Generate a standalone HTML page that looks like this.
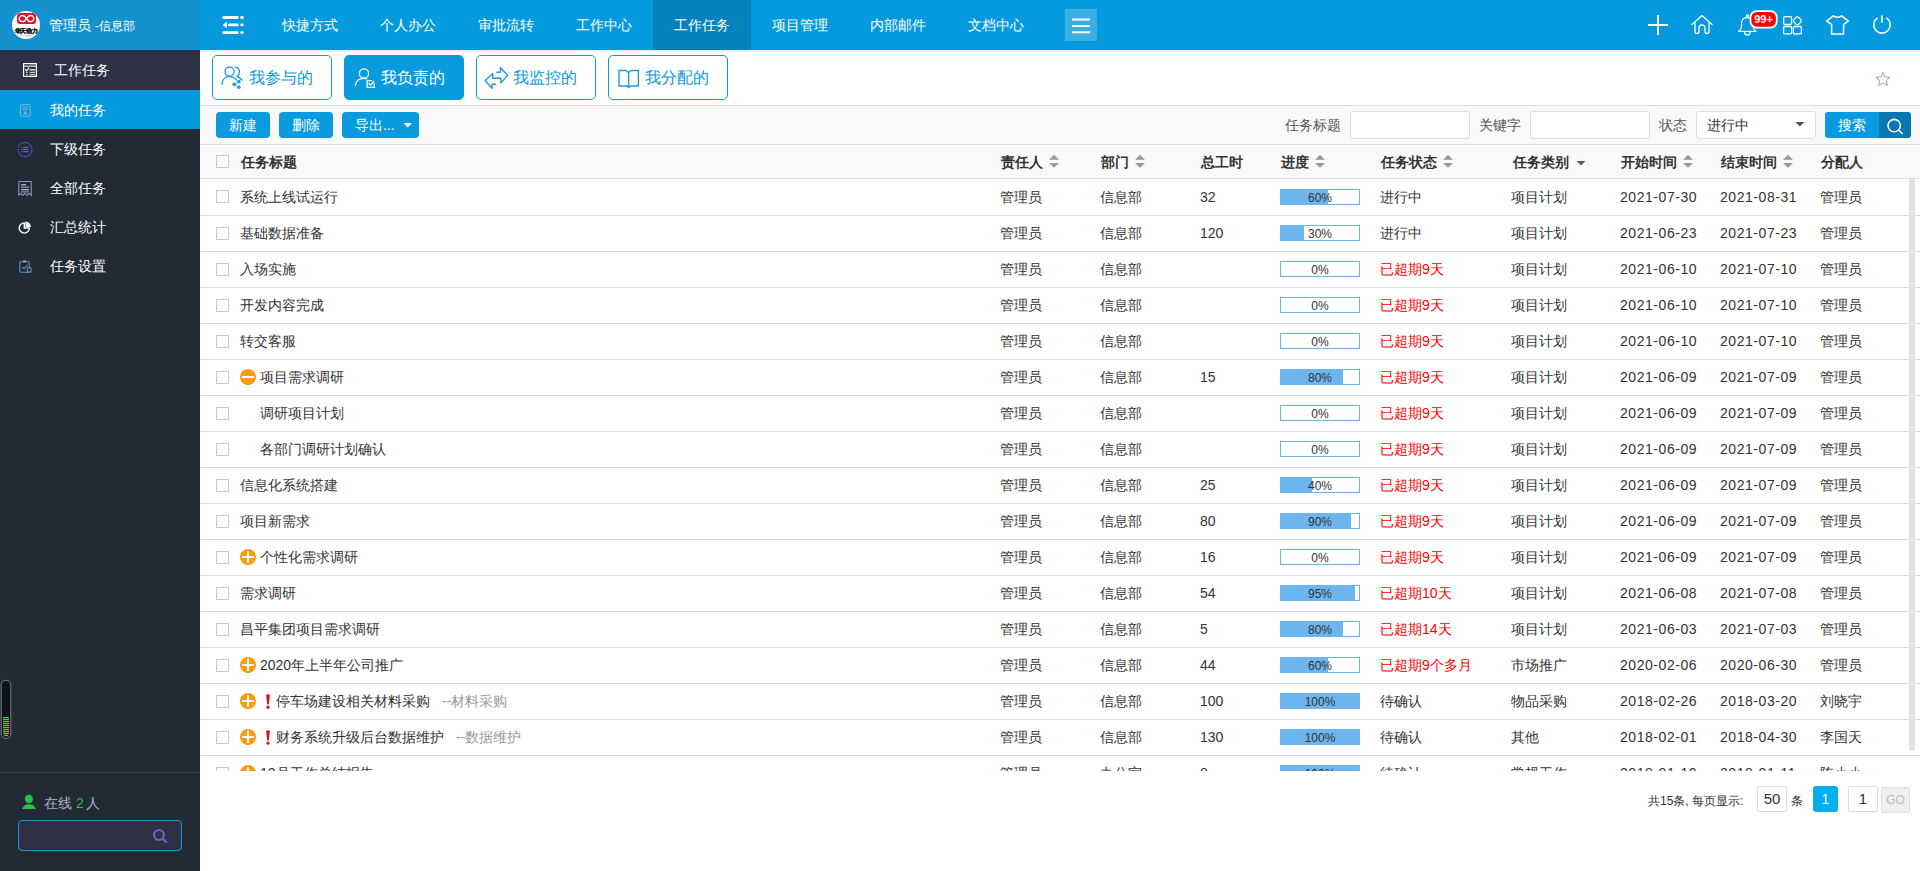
<!DOCTYPE html>
<html><head><meta charset="utf-8">
<style>
*{box-sizing:border-box;margin:0;padding:0}
html,body{width:1920px;height:871px;overflow:hidden;background:#fff;font-family:"Liberation Sans",sans-serif;font-size:14px;color:#333}
.abs{position:absolute}
#side{position:absolute;left:0;top:0;width:200px;height:871px;background:#222a36}
#shead{position:absolute;left:0;top:0;width:200px;height:50px;background:#1492d0}
#logo{position:absolute;left:12px;top:11px;width:28px;height:28px;border-radius:50%;background:#fff;overflow:hidden}
#uname{position:absolute;left:49px;top:16px;color:#fff;font-size:14px;line-height:18px;white-space:nowrap}
.mi{position:absolute;left:0;width:200px;height:39px;color:#fff;font-size:14px}
.mi span{position:absolute;left:50px;top:11px;line-height:18px;white-space:nowrap}
.mi svg{position:absolute}
#nav{position:absolute;left:200px;top:0;width:1720px;height:50px;background:#059add}
.nv{position:absolute;top:0;height:50px;width:98px;color:#fff;font-size:14px;line-height:50px;text-align:center;white-space:nowrap}
.nv.act{background:#0382be}
#tabs{position:absolute;left:200px;top:50px;width:1720px;height:56px;background:#fff;border-bottom:1px solid #ddd}
.tb{position:absolute;top:5px;width:120px;height:45px;border:1px solid #099bdd;border-radius:5px;color:#099bdd;font-size:16px}
.tb.act{background:#099bdd;color:#fff}
.tb span{position:absolute;left:36px;top:12px;line-height:20px;white-space:nowrap}
.tb svg{position:absolute}
#tool{position:absolute;left:200px;top:106px;width:1720px;height:39px;background:#f9f9f9;border-bottom:1px solid #ddd}
.bt{position:absolute;top:6px;height:26px;background:#099bdd;border-radius:4px;color:#fff;font-size:14px;line-height:26px}
.lbl{position:absolute;top:10px;line-height:18px;font-size:14px;color:#555;white-space:nowrap}
.inp{position:absolute;top:5px;width:120px;height:28px;background:#fff;border:1px solid #ddd;border-radius:3px}
#thead{position:absolute;left:200px;top:145px;width:1720px;height:34px;background:#f9f9f9;border-bottom:1px solid #ddd}
.th{position:absolute;top:8px;line-height:18px;font-weight:bold;color:#333;white-space:nowrap}
.cb{position:absolute;left:16px;width:13px;height:13px;border:1px solid #c8c8c8;background:#fff;display:block}
.srt{position:absolute;top:10px}
#tbody{position:absolute;left:200px;top:179px;width:1720px;height:592px;overflow:hidden;background:#fff}
.row{position:absolute;left:0;width:1720px;height:37px;border-bottom:1px solid #ddd}
.row .cb{top:12px}
.tt{position:absolute;left:40px;top:9px;line-height:18px;white-space:nowrap;color:#333}
.c{position:absolute;top:9px;line-height:18px;white-space:nowrap;color:#333}
.c.red{color:#f00}
.d{letter-spacing:.55px}
.sub{color:#999;margin-left:12px}
.tg{position:absolute;left:40px;top:10px}
.ex{position:absolute;left:65px;top:11px}
.pbw{position:absolute;left:1080px;top:10px}
.r0 .tt,.r0 .c{top:10px}
.r0 .pbw{top:11px}
.pb{position:relative;width:80px;height:16px;border:1px solid #6cb5ef;background:#fff;overflow:hidden}
.pf{position:absolute;left:0;top:0;height:14px;background:#6cb5ef}
.pb span{position:absolute;left:0;top:1px;width:78px;text-align:center;line-height:14px;font-size:12px;color:#333}
#sbar{position:absolute;left:1909px;top:179px;width:6px;height:572px;background:#e1e1e1;border-radius:1px 1px 3px 3px}
#pager{position:absolute;left:0;top:0}
</style></head><body>
<div id="side">
  <div id="shead">
    <div id="logo"><svg width="28" height="28" viewBox="0 0 28 28"><path d="M8,2 H20.5 Q24,2 24,5.5 V10 Q24,13 21,13 H8 Q5,13 5,10 V5.5 Q5,2 8,2 Z" fill="#e0102a"/><path d="M14.5,7.6 C13,5.2 12,4.5 10.6,4.5 C8.6,4.5 7.2,5.9 7.2,7.6 C7.2,9.3 8.6,10.7 10.6,10.7 C12,10.7 13,10 14.5,7.6 C16,5.2 17,4.5 18.4,4.5 C20.4,4.5 21.8,5.9 21.8,7.6 C21.8,9.3 20.4,10.7 18.4,10.7 C17,10.7 16,10 14.5,7.6 Z" fill="none" stroke="#fff" stroke-width="1.3"/><text x="14" y="21.6" font-family="Liberation Sans" font-weight="bold" font-size="6.2" text-anchor="middle" fill="#222" stroke="#222" stroke-width="0.35" letter-spacing="-0.3">华天动力</text><text x="14" y="25.6" font-family="Liberation Sans" font-size="3.6" text-anchor="middle" fill="#aaa">OPOWER</text></svg></div>
    <div id="uname">管理员 <span style="font-size:12px">-信息部</span></div>
  </div>
  <div class="mi" style="top:50px;height:40px;background:#2e3045"><svg style="left:23px;top:63px" width="15" height="15"></svg><span style="left:54px;top:11px">工作任务</span></div>
  <div class="mi" style="top:90px;background:#059add"><span style="top:11px">我的任务</span></div>
  <div class="mi" style="top:129px"><span>下级任务</span></div>
  <div class="mi" style="top:168px"><span>全部任务</span></div>
  <div class="mi" style="top:207px"><span>汇总统计</span></div>
  <div class="mi" style="top:246px"><span>任务设置</span></div>
  <div class="abs" style="left:0;top:772px;width:200px;height:1px;background:#343b4a"></div>
  <div class="abs" style="left:44px;top:794px;color:#a3b1c2;font-size:14px;line-height:18px;white-space:nowrap">在线 <span style="color:#2bbd4b;margin-right:2px">2</span>人</div>
  <div class="abs" style="left:18px;top:820px;width:164px;height:31px;border:1px solid #1597d8;border-radius:4px;background:#2e3045"></div>
</div>
<div id="nav">
  <div class="nv" style="left:61px">快捷方式</div>
  <div class="nv" style="left:159px">个人办公</div>
  <div class="nv" style="left:257px">审批流转</div>
  <div class="nv" style="left:355px">工作中心</div>
  <div class="nv act" style="left:453px">工作任务</div>
  <div class="nv" style="left:551px">项目管理</div>
  <div class="nv" style="left:649px">内部邮件</div>
  <div class="nv" style="left:747px">文档中心</div>
</div>
<div class="abs" style="left:200px;top:50px;width:1720px;height:3px;background:linear-gradient(#ebe8e7,#fff);z-index:1"></div>
<div id="tabs">
  <div class="tb" style="left:12px"><span>我参与的</span></div>
  <div class="tb act" style="left:144px"><span>我负责的</span></div>
  <div class="tb" style="left:276px"><span>我监控的</span></div>
  <div class="tb" style="left:408px"><span>我分配的</span></div>
</div>
<div id="tool">
  <div class="bt" style="left:16px;width:54px;text-align:center">新建</div>
  <div class="bt" style="left:79px;width:54px;text-align:center">删除</div>
  <div class="bt" style="left:142px;width:77px;padding-left:13px">导出...</div>
  <div class="lbl" style="left:1085px">任务标题</div>
  <div class="inp" style="left:1150px"></div>
  <div class="lbl" style="left:1279px">关键字</div>
  <div class="inp" style="left:1330px"></div>
  <div class="lbl" style="left:1459px">状态</div>
  <div class="inp" style="left:1496px"><span class="abs" style="left:10px;top:4px;line-height:18px;color:#333">进行中</span></div>
  <div class="abs" style="left:1625px;top:6px;width:54px;height:26px;background:#099bdd;border-radius:3px 0 0 3px;color:#fff;line-height:26px;text-align:center">搜索</div>
  <div class="abs" style="left:1679px;top:6px;width:32px;height:26px;background:#0a77b0;border-radius:0 3px 3px 0"></div>
</div>
<div id="thead">
  <i class="cb" style="top:10px"></i>
  <div class="th" style="left:41px">任务标题</div>
  <div class="th" style="left:801px">责任人</div>
  <div class="th" style="left:901px">部门</div>
  <div class="th" style="left:1001px">总工时</div>
  <div class="th" style="left:1081px">进度</div>
  <div class="th" style="left:1181px">任务状态</div>
  <div class="th" style="left:1313px">任务类别</div>
  <div class="th" style="left:1421px">开始时间</div>
  <div class="th" style="left:1521px">结束时间</div>
  <div class="th" style="left:1621px">分配人</div>
</div>
<div id="tbody">
<div class="row r0" style="top:-1px;height:38px"><i class="cb"></i><span class="tt">系统上线试运行</span><span class="c" style="left:800px">管理员</span><span class="c" style="left:900px">信息部</span><span class="c n" style="left:1000px">32</span><div class="pbw"><div class="pb"><div class="pf" style="width:47px"></div><span>60%</span></div></div><span class="c" style="left:1180px">进行中</span><span class="c" style="left:1311px">项目计划</span><span class="c n d" style="left:1420px">2021-07-30</span><span class="c n d" style="left:1520px">2021-08-31</span><span class="c" style="left:1620px">管理员</span></div>
<div class="row" style="top:36px;height:37px"><i class="cb"></i><span class="tt">基础数据准备</span><span class="c" style="left:800px">管理员</span><span class="c" style="left:900px">信息部</span><span class="c n" style="left:1000px">120</span><div class="pbw"><div class="pb"><div class="pf" style="width:23px"></div><span>30%</span></div></div><span class="c" style="left:1180px">进行中</span><span class="c" style="left:1311px">项目计划</span><span class="c n d" style="left:1420px">2021-06-23</span><span class="c n d" style="left:1520px">2021-07-23</span><span class="c" style="left:1620px">管理员</span></div>
<div class="row" style="top:72px;height:37px"><i class="cb"></i><span class="tt">入场实施</span><span class="c" style="left:800px">管理员</span><span class="c" style="left:900px">信息部</span><span class="c n" style="left:1000px"></span><div class="pbw"><div class="pb"><div class="pf" style="width:0px"></div><span>0%</span></div></div><span class="c red" style="left:1180px">已超期9天</span><span class="c" style="left:1311px">项目计划</span><span class="c n d" style="left:1420px">2021-06-10</span><span class="c n d" style="left:1520px">2021-07-10</span><span class="c" style="left:1620px">管理员</span></div>
<div class="row" style="top:108px;height:37px"><i class="cb"></i><span class="tt">开发内容完成</span><span class="c" style="left:800px">管理员</span><span class="c" style="left:900px">信息部</span><span class="c n" style="left:1000px"></span><div class="pbw"><div class="pb"><div class="pf" style="width:0px"></div><span>0%</span></div></div><span class="c red" style="left:1180px">已超期9天</span><span class="c" style="left:1311px">项目计划</span><span class="c n d" style="left:1420px">2021-06-10</span><span class="c n d" style="left:1520px">2021-07-10</span><span class="c" style="left:1620px">管理员</span></div>
<div class="row" style="top:144px;height:37px"><i class="cb"></i><span class="tt">转交客服</span><span class="c" style="left:800px">管理员</span><span class="c" style="left:900px">信息部</span><span class="c n" style="left:1000px"></span><div class="pbw"><div class="pb"><div class="pf" style="width:0px"></div><span>0%</span></div></div><span class="c red" style="left:1180px">已超期9天</span><span class="c" style="left:1311px">项目计划</span><span class="c n d" style="left:1420px">2021-06-10</span><span class="c n d" style="left:1520px">2021-07-10</span><span class="c" style="left:1620px">管理员</span></div>
<div class="row" style="top:180px;height:37px"><i class="cb"></i><svg class="tg" width="16" height="16" viewBox="0 0 16 16"><circle cx="8" cy="8" r="8" fill="#fc9b10"/><rect x="2" y="7" width="12" height="2" fill="#fff"/></svg><span class="tt" style="left:60px">项目需求调研</span><span class="c" style="left:800px">管理员</span><span class="c" style="left:900px">信息部</span><span class="c n" style="left:1000px">15</span><div class="pbw"><div class="pb"><div class="pf" style="width:62px"></div><span>80%</span></div></div><span class="c red" style="left:1180px">已超期9天</span><span class="c" style="left:1311px">项目计划</span><span class="c n d" style="left:1420px">2021-06-09</span><span class="c n d" style="left:1520px">2021-07-09</span><span class="c" style="left:1620px">管理员</span></div>
<div class="row" style="top:216px;height:37px"><i class="cb"></i><span class="tt" style="left:60px">调研项目计划</span><span class="c" style="left:800px">管理员</span><span class="c" style="left:900px">信息部</span><span class="c n" style="left:1000px"></span><div class="pbw"><div class="pb"><div class="pf" style="width:0px"></div><span>0%</span></div></div><span class="c red" style="left:1180px">已超期9天</span><span class="c" style="left:1311px">项目计划</span><span class="c n d" style="left:1420px">2021-06-09</span><span class="c n d" style="left:1520px">2021-07-09</span><span class="c" style="left:1620px">管理员</span></div>
<div class="row" style="top:252px;height:37px"><i class="cb"></i><span class="tt" style="left:60px">各部门调研计划确认</span><span class="c" style="left:800px">管理员</span><span class="c" style="left:900px">信息部</span><span class="c n" style="left:1000px"></span><div class="pbw"><div class="pb"><div class="pf" style="width:0px"></div><span>0%</span></div></div><span class="c red" style="left:1180px">已超期9天</span><span class="c" style="left:1311px">项目计划</span><span class="c n d" style="left:1420px">2021-06-09</span><span class="c n d" style="left:1520px">2021-07-09</span><span class="c" style="left:1620px">管理员</span></div>
<div class="row" style="top:288px;height:37px"><i class="cb"></i><span class="tt">信息化系统搭建</span><span class="c" style="left:800px">管理员</span><span class="c" style="left:900px">信息部</span><span class="c n" style="left:1000px">25</span><div class="pbw"><div class="pb"><div class="pf" style="width:31px"></div><span>40%</span></div></div><span class="c red" style="left:1180px">已超期9天</span><span class="c" style="left:1311px">项目计划</span><span class="c n d" style="left:1420px">2021-06-09</span><span class="c n d" style="left:1520px">2021-07-09</span><span class="c" style="left:1620px">管理员</span></div>
<div class="row" style="top:324px;height:37px"><i class="cb"></i><span class="tt">项目新需求</span><span class="c" style="left:800px">管理员</span><span class="c" style="left:900px">信息部</span><span class="c n" style="left:1000px">80</span><div class="pbw"><div class="pb"><div class="pf" style="width:70px"></div><span>90%</span></div></div><span class="c red" style="left:1180px">已超期9天</span><span class="c" style="left:1311px">项目计划</span><span class="c n d" style="left:1420px">2021-06-09</span><span class="c n d" style="left:1520px">2021-07-09</span><span class="c" style="left:1620px">管理员</span></div>
<div class="row" style="top:360px;height:37px"><i class="cb"></i><svg class="tg" width="16" height="16" viewBox="0 0 16 16"><circle cx="8" cy="8" r="8" fill="#fc9b10"/><rect x="2" y="7" width="12" height="2" fill="#fff"/><rect x="7" y="2" width="2" height="12" fill="#fff"/></svg><span class="tt" style="left:60px">个性化需求调研</span><span class="c" style="left:800px">管理员</span><span class="c" style="left:900px">信息部</span><span class="c n" style="left:1000px">16</span><div class="pbw"><div class="pb"><div class="pf" style="width:0px"></div><span>0%</span></div></div><span class="c red" style="left:1180px">已超期9天</span><span class="c" style="left:1311px">项目计划</span><span class="c n d" style="left:1420px">2021-06-09</span><span class="c n d" style="left:1520px">2021-07-09</span><span class="c" style="left:1620px">管理员</span></div>
<div class="row" style="top:396px;height:37px"><i class="cb"></i><span class="tt">需求调研</span><span class="c" style="left:800px">管理员</span><span class="c" style="left:900px">信息部</span><span class="c n" style="left:1000px">54</span><div class="pbw"><div class="pb"><div class="pf" style="width:74px"></div><span>95%</span></div></div><span class="c red" style="left:1180px">已超期10天</span><span class="c" style="left:1311px">项目计划</span><span class="c n d" style="left:1420px">2021-06-08</span><span class="c n d" style="left:1520px">2021-07-08</span><span class="c" style="left:1620px">管理员</span></div>
<div class="row" style="top:432px;height:37px"><i class="cb"></i><span class="tt">昌平集团项目需求调研</span><span class="c" style="left:800px">管理员</span><span class="c" style="left:900px">信息部</span><span class="c n" style="left:1000px">5</span><div class="pbw"><div class="pb"><div class="pf" style="width:62px"></div><span>80%</span></div></div><span class="c red" style="left:1180px">已超期14天</span><span class="c" style="left:1311px">项目计划</span><span class="c n d" style="left:1420px">2021-06-03</span><span class="c n d" style="left:1520px">2021-07-03</span><span class="c" style="left:1620px">管理员</span></div>
<div class="row" style="top:468px;height:37px"><i class="cb"></i><svg class="tg" width="16" height="16" viewBox="0 0 16 16"><circle cx="8" cy="8" r="8" fill="#fc9b10"/><rect x="2" y="7" width="12" height="2" fill="#fff"/><rect x="7" y="2" width="2" height="12" fill="#fff"/></svg><span class="tt" style="left:60px">2020年上半年公司推广</span><span class="c" style="left:800px">管理员</span><span class="c" style="left:900px">信息部</span><span class="c n" style="left:1000px">44</span><div class="pbw"><div class="pb"><div class="pf" style="width:47px"></div><span>60%</span></div></div><span class="c red" style="left:1180px">已超期9个多月</span><span class="c" style="left:1311px">市场推广</span><span class="c n d" style="left:1420px">2020-02-06</span><span class="c n d" style="left:1520px">2020-06-30</span><span class="c" style="left:1620px">管理员</span></div>
<div class="row" style="top:504px;height:37px"><i class="cb"></i><svg class="tg" width="16" height="16" viewBox="0 0 16 16"><circle cx="8" cy="8" r="8" fill="#fc9b10"/><rect x="2" y="7" width="12" height="2" fill="#fff"/><rect x="7" y="2" width="2" height="12" fill="#fff"/></svg><svg class="ex" width="6" height="16" viewBox="0 0 6 16"><path d="M1.2,1.6 Q1.2,0.2 3,0.2 Q4.8,0.2 4.8,1.6 L3.8,10.6 H2.2 Z" fill="#d8130f"/><circle cx="3" cy="13.2" r="1.6" fill="#d8130f"/></svg><span class="tt" style="left:76px">停车场建设相关材料采购<span class="sub">--材料采购</span></span><span class="c" style="left:800px">管理员</span><span class="c" style="left:900px">信息部</span><span class="c n" style="left:1000px">100</span><div class="pbw"><div class="pb"><div class="pf" style="width:78px"></div><span>100%</span></div></div><span class="c" style="left:1180px">待确认</span><span class="c" style="left:1311px">物品采购</span><span class="c n d" style="left:1420px">2018-02-26</span><span class="c n d" style="left:1520px">2018-03-20</span><span class="c" style="left:1620px">刘晓宇</span></div>
<div class="row" style="top:540px;height:37px"><i class="cb"></i><svg class="tg" width="16" height="16" viewBox="0 0 16 16"><circle cx="8" cy="8" r="8" fill="#fc9b10"/><rect x="2" y="7" width="12" height="2" fill="#fff"/><rect x="7" y="2" width="2" height="12" fill="#fff"/></svg><svg class="ex" width="6" height="16" viewBox="0 0 6 16"><path d="M1.2,1.6 Q1.2,0.2 3,0.2 Q4.8,0.2 4.8,1.6 L3.8,10.6 H2.2 Z" fill="#d8130f"/><circle cx="3" cy="13.2" r="1.6" fill="#d8130f"/></svg><span class="tt" style="left:76px">财务系统升级后台数据维护<span class="sub">--数据维护</span></span><span class="c" style="left:800px">管理员</span><span class="c" style="left:900px">信息部</span><span class="c n" style="left:1000px">130</span><div class="pbw"><div class="pb"><div class="pf" style="width:78px"></div><span>100%</span></div></div><span class="c" style="left:1180px">待确认</span><span class="c" style="left:1311px">其他</span><span class="c n d" style="left:1420px">2018-02-01</span><span class="c n d" style="left:1520px">2018-04-30</span><span class="c" style="left:1620px">李国天</span></div>
<div class="row" style="top:576px;height:37px"><i class="cb"></i><svg class="tg" width="16" height="16" viewBox="0 0 16 16"><circle cx="8" cy="8" r="8" fill="#fc9b10"/><rect x="2" y="7" width="12" height="2" fill="#fff"/><rect x="7" y="2" width="2" height="12" fill="#fff"/></svg><span class="tt" style="left:60px">12月工作总结报告</span><span class="c" style="left:800px">管理员</span><span class="c" style="left:900px">办公室</span><span class="c n" style="left:1000px">8</span><div class="pbw"><div class="pb"><div class="pf" style="width:78px"></div><span>100%</span></div></div><span class="c" style="left:1180px">待确认</span><span class="c" style="left:1311px">常规工作</span><span class="c n d" style="left:1420px">2018-01-10</span><span class="c n d" style="left:1520px">2018-01-11</span><span class="c" style="left:1620px">陈小小</span></div>
</div>
<div id="sbar"></div>
<div class="abs" style="left:1648px;top:792px;font-size:12px;line-height:18px;color:#333;white-space:nowrap">共15条, 每页显示:</div>
<div class="abs" style="left:1757px;top:786px;width:30px;height:26px;border:1px solid #ddd;border-radius:2px;text-align:center;line-height:24px;font-size:15px;color:#333">50</div>
<div class="abs" style="left:1791px;top:792px;font-size:12px;line-height:18px;color:#333">条</div>
<div class="abs" style="left:1813px;top:786px;width:25px;height:26px;background:#00aff0;border-radius:3px;text-align:center;line-height:26px;font-size:14px;color:#fff">1</div>
<div class="abs" style="left:1848px;top:786px;width:30px;height:26px;border:1px solid #ddd;border-radius:2px;text-align:center;line-height:24px;font-size:15px;color:#333">1</div>
<div class="abs" style="left:1881px;top:787px;width:29px;height:26px;border:1px solid #ddd;border-radius:2px;background:#f0f0f0;text-align:center;line-height:24px;font-size:12px;color:#bbb">GO</div>
<svg id="ov" width="1920" height="871" viewBox="0 0 1920 871" style="position:absolute;left:0;top:0;pointer-events:none">
<!-- volume bar -->
<rect x="1.2" y="680.3" width="9.6" height="58.2" rx="4.8" fill="#0f1318" stroke="#7a7f87" stroke-width="1"/>
<g fill="#3fd35d">
<rect x="3" y="717" width="6" height="1.2"/><rect x="3" y="719" width="6" height="1.2"/><rect x="3" y="721" width="6" height="1.2"/><rect x="3" y="723" width="6" height="1.2"/><rect x="3" y="725" width="6" height="1.2"/><rect x="3" y="727" width="6" height="1.2"/><rect x="3" y="729" width="6" height="1.2"/><rect x="3" y="731" width="6" height="1.2"/><rect x="3" y="733" width="6" height="1.2"/><rect x="4" y="735" width="4" height="1.2"/>
</g>
<!-- person -->
<g fill="#2bc24c"><ellipse cx="28.9" cy="799" rx="4.1" ry="4.2"/><path d="M22,809 L24.5,805.5 Q28.9,803 33.5,805.5 L36,809 Z"/></g>
<!-- sidebar search -->
<g fill="none" stroke="#7466d8" stroke-width="1.9"><circle cx="159" cy="835" r="4.9"/><path d="M162.5,838.5 L167,842.5"/></g>
<!-- sidebar menu icons -->
<g fill="none" stroke="#fff" stroke-width="1.2">
<rect x="23.6" y="63.6" width="12.8" height="12.8"/>
</g>
<path d="M24,66.2 H36" stroke="#fff" stroke-width="1"/><g fill="#e8b04a"><rect x="30.5" y="64.4" width="1" height="1"/><rect x="32.3" y="64.4" width="1" height="1"/><rect x="34.1" y="64.4" width="1" height="1"/></g>
<path d="M25.2,69 L26.6,70.8 L29.2,67.6" fill="none" stroke="#fff" stroke-width="1.1"/>
<g fill="#c8cfd8"><rect x="29.6" y="69" width="5.6" height="1.6"/><rect x="29.6" y="71.8" width="5.6" height="1.2"/><rect x="29.6" y="74" width="5.6" height="1.2"/><rect x="26" y="71.8" width="1.6" height="1.2"/><rect x="26" y="74" width="1.6" height="1.2"/></g>
<g fill="none" stroke="#7fb3d3" stroke-width="1"><rect x="20.5" y="104.6" width="9.6" height="11.6" rx="1"/><path d="M22.6,107.2 H28 M22.6,109.4 H28"/></g>
<path d="M25.3,110.6 L23,114.2 L27.6,114.2 Z" fill="#7fb3d3"/>
<g fill="none" stroke="#5046c0" stroke-width="1.1"><circle cx="25" cy="149.5" r="7.1"/></g>
<g fill="#7466d0"><rect x="22.8" y="146.8" width="5.8" height="1"/><rect x="22.8" y="149" width="5.8" height="1"/><rect x="22.8" y="151.2" width="5.8" height="1"/><rect x="21.2" y="146.8" width="1" height="1"/><rect x="21.2" y="149" width="1" height="1"/><rect x="21.2" y="151.2" width="1" height="1"/></g>
<path d="M18.8,181.5 H31.2 V195.2 L29.1,193.4 L27.1,195.2 L25,193.4 L22.9,195.2 L20.8,193.4 L18.8,195.2 Z" fill="none" stroke="#8a9ab0" stroke-width="1.1"/>
<g fill="#9fb0c6"><rect x="21" y="184" width="5" height="1.4"/><rect x="21" y="186.6" width="8" height="1"/><rect x="21" y="188.9" width="8" height="1.4"/><rect x="21" y="191.4" width="8" height="1"/></g>
<path d="M24.3,222.9 A5.1,5.1 0 1 0 29.4,228 H24.3 Z" fill="none" stroke="#fff" stroke-width="1.4" stroke-linejoin="round"/>
<path d="M25.4,226.9 V221.4 A5.5,5.5 0 0 1 30.9,226.9 Z" fill="#fff"/>
<g fill="none" stroke="#6a8cb8" stroke-width="1.1"><rect x="19.8" y="261.8" width="9.4" height="10.4" rx="0.6"/><path d="M22.3,266.8 L24,268.6 L27.2,265"/></g>
<path d="M22.4,262.2 L23.4,260.2 H25.6 L26.6,262.2 Z" fill="#8aa6c8"/>
<rect x="27.4" y="267.8" width="3.6" height="4.2" fill="#222a36" stroke="#6a8cb8" stroke-width="1.1"/>
<!-- logo -->
<!-- nav hamburger -->
<g fill="#fff">
<rect x="222.2" y="16.1" width="16.5" height="2.8" rx="1.4"/><rect x="240.3" y="16.1" width="3.4" height="2.8" rx="1.4"/>
<polygon points="222.7,24.9 227,21.5 227,28.3"/>
<rect x="228" y="23.6" width="10.7" height="2.6" rx="1.3"/><rect x="240.3" y="23.6" width="3.4" height="2.6" rx="1.3"/>
<rect x="222.2" y="31.2" width="16.5" height="2.8" rx="1.4"/><rect x="240.3" y="31.2" width="3.4" height="2.8" rx="1.4"/>
</g>
<rect x="1065" y="9" width="32" height="32" fill="#3aafe4"/>
<g fill="#fff"><rect x="1072" y="18.5" width="18" height="2"/><rect x="1072" y="25" width="18" height="2"/><rect x="1072" y="31.3" width="18" height="2"/></g>
<!-- right icons -->
<g fill="#fff"><rect x="1657" y="15" width="2" height="20"/><rect x="1648" y="24" width="20" height="2"/></g>
<g fill="none" stroke="#fff" stroke-width="1.3" stroke-linejoin="round" stroke-linecap="round">
<path d="M1692,24.5 L1702,15.6 L1712,24.5"/>
<path d="M1695,22.6 V31.4 Q1695,33.4 1697,33.4 Q1699,33.4 1699,31.4 V28 A3,3 0 0 1 1705,28 V31.4 Q1705,33.4 1707,33.4 Q1709,33.4 1709,31.4 V22.6"/>
<circle cx="1747.3" cy="16" r="1.1"/>
<path d="M1738.6,31.4 Q1741.6,29.2 1741.6,25.2 V23.2 C1741.6,19.6 1744,17.6 1747.3,17.6 C1750.6,17.6 1753,19.6 1753,23.2 V25.2 Q1753,29.2 1756,31.4 Z" stroke-width="1.15"/>
<path d="M1744.6,32.2 A2.7,2.7 0 0 0 1750,32.2"/>
<rect x="1783.6" y="16.7" width="8" height="7.8" rx="1.6"/>
<rect x="-3.3" y="-3.3" width="6.6" height="6.6" rx="2" transform="translate(1797.4,20.8) rotate(45)" stroke-width="1.2"/>
<rect x="1783.6" y="26.5" width="8" height="7.4" rx="1"/>
<rect x="1793.4" y="26.5" width="8" height="7.4" rx="1"/>
<path d="M1833.3,15.8 Q1837.5,18.6 1841.7,15.8 L1848.3,21.2 L1843.6,24.4 V34 H1831.6 V24.4 L1826.6,21.2 Z" stroke-width="1.5"/>
<path d="M1877.6,17.9 A8.2,8.2 0 1 0 1886.4,17.9" stroke-width="1.5" stroke-linecap="butt"/>
<path d="M1882,15.6 V22.6" stroke-width="1.6" stroke-linecap="butt"/>
</g>
<rect x="1749.6" y="10.2" width="28" height="18.3" rx="7" fill="#fff"/>
<rect x="1751.3" y="11.9" width="24.6" height="14.9" rx="5.8" fill="#f00"/>
<text x="1763.6" y="23.2" fill="#fff" font-family="Liberation Sans" font-weight="bold" font-size="11" text-anchor="middle">99+</text>
<!-- tab icons -->
<g fill="none" stroke="#1b9ce0" stroke-width="1.3" stroke-linecap="round" stroke-linejoin="round">
<circle cx="229.6" cy="71.6" r="4.6"/>
<path d="M222,84.4 C222,79.5 225.2,76.6 229.6,76.6 C232.6,76.6 234.8,78 236.4,80"/>
<path d="M235.4,67.2 C238.2,67.6 239.4,69.8 239.4,71.8 C239.4,74 238.2,75.6 237,76.4 C239,77.4 240.8,78.6 242.2,80"/>
<path d="M238.9,81.5 L234.3,84.4 L238.9,87.4" stroke-width="0.9"/>
</g>
<g fill="#1b9ce0"><circle cx="238.9" cy="81.6" r="1.8"/><circle cx="234.2" cy="84.4" r="1.8"/><circle cx="238.9" cy="87.3" r="1.8"/></g>
<g fill="none" stroke="#fff" stroke-width="1.3" stroke-linecap="round" stroke-linejoin="round">
<circle cx="364" cy="73.4" r="4.6"/>
<path d="M355.4,85.4 C356,81 359.2,78.4 364,78.4 C365,78.4 366,78.6 366.8,78.8"/>
<path d="M371.6,80.6 H367.2 V87.4 H374.2 V83.4"/>
<path d="M368.8,83.4 L370.3,85.2 L373.8,81.4"/>
</g>
<g fill="none" stroke="#1b9ce0" stroke-width="1.4" stroke-linejoin="round" stroke-linecap="round">
<path d="M496.9,72.3 H500.4 V67.7 L507.7,75.4 L500.9,82.9 V78.3 H492.7 V73.6 L485.1,80.7 L492.1,88.3 V84.2 H495.8"/>
<path d="M619,70.5 H626 L628.6,72.3 L631.2,70.5 H638.4 V86 H630.2 L628.6,87.4 L627,86 H619 Z"/>
<path d="M628.6,72.3 V86.4"/>
</g>
<!-- star -->
<path d="M1883,72.4 L1885,77 L1889.9,77.4 L1886.2,80.6 L1887.4,85.4 L1883,82.8 L1878.6,85.4 L1879.8,80.6 L1876.1,77.4 L1881,77 Z" fill="none" stroke="#8ea4c2" stroke-width="1"/>
<!-- toolbar -->
<polygon points="403.5,123 412,123 407.75,127.6" fill="#fff"/>
<polygon points="1795.4,122 1804.4,122 1799.9,126.6" fill="#555"/>
<g fill="none" stroke="#fff" stroke-width="1.6"><circle cx="1894.2" cy="125.6" r="6.2"/><path d="M1898.6,130 L1902.6,134"/></g>
<!-- sort icons -->
<g fill="#999">
<path d="M1049,159.8 L1054,154.8 L1059,159.8 Z M1049,162.9 L1059,162.9 L1054,167.8 Z"/>
<path d="M1135,159.8 L1140,154.8 L1145,159.8 Z M1135,162.9 L1145,162.9 L1140,167.8 Z"/>
<path d="M1315,159.8 L1320,154.8 L1325,159.8 Z M1315,162.9 L1325,162.9 L1320,167.8 Z"/>
<path d="M1443,159.8 L1448,154.8 L1453,159.8 Z M1443,162.9 L1453,162.9 L1448,167.8 Z"/>
<path d="M1683,159.8 L1688,154.8 L1693,159.8 Z M1683,162.9 L1693,162.9 L1688,167.8 Z"/>
<path d="M1783,159.8 L1788,154.8 L1793,159.8 Z M1783,162.9 L1793,162.9 L1788,167.8 Z"/>
</g>
<path d="M1576.6,161 L1585.4,161 L1581,165.4 Z" fill="#5a5a5a"/>
</svg>

</body></html>
